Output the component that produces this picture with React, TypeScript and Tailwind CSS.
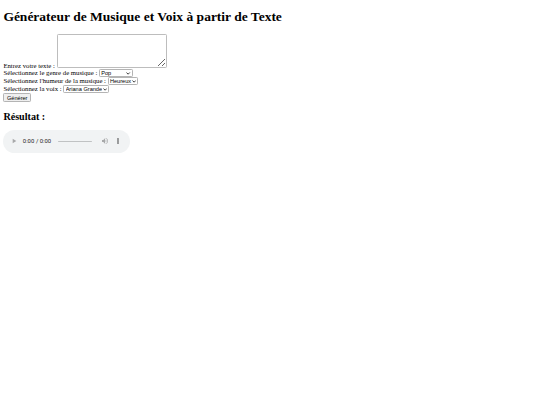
import React from 'react'

const Chevron = () => (
  <svg
    className="absolute right-[6px] top-[7px] pointer-events-none"
    width="10"
    height="7"
    viewBox="0 0 10 7"
  >
    <path d="M1 1.2l4 4 4-4" stroke="#000" strokeWidth="1.8" fill="none" />
  </svg>
)

const Select = ({ id, width, options }: { id: string; width: string; options: string[] }) => (
  <span className="relative inline-block">
    <select
      id={id}
      className={`appearance-none ${width} h-[19px] pl-[3px] pr-[14px] border border-[#b4b4b4] rounded-[3px] bg-white text-black font-['Liberation_Sans',Arial,sans-serif] text-[13.33px] leading-[normal]`}
    >
      {options.map((o) => (
        <option key={o}>{o}</option>
      ))}
    </select>
    <Chevron />
  </span>
)

const App: React.FC = () => {
  return (
    <div className="[zoom:0.421875] min-h-[960px] bg-white text-black font-['Liberation_Serif','Times_New_Roman',serif] text-[16px] leading-[normal]">
      <div className="m-[8px]">
        <h1 className="text-[32px] font-bold my-[21.44px]">Générateur de Musique et Voix à partir de Texte</h1>

        <form onSubmit={(e) => e.preventDefault()}>
          <label htmlFor="text">Entrez votre texte :</label>{' '}
          <textarea
            id="text"
            className="w-[262px] h-[81px] p-[2px] border border-[#bdbdbd] rounded-[3px] bg-white font-['DejaVu_Sans_Mono',monospace] text-[13.33px] leading-[normal] align-baseline"
          ></textarea>
          <br />
          <label htmlFor="genre">Sélectionnez le genre de musique :</label>{' '}
          <Select id="genre" width="w-[81px]" options={['Pop', 'Rock', 'Jazz', 'Classique']} />
          <br />
          <label htmlFor="mood">Sélectionnez l'humeur de la musique :</label>{' '}
          <Select id="mood" width="w-[73px]" options={['Heureux', 'Triste', 'Calme']} />
          <br />
          <label htmlFor="voice">Sélectionnez la voix :</label>{' '}
          <Select id="voice" width="w-[109px]" options={['Ariana Grande', 'Drake']} />
          <br />
          <button
            type="submit"
            className="px-[6px] py-[1px] border border-[#b4b4b4] rounded-[3px] bg-[#efefef] text-black font-['Liberation_Sans',Arial,sans-serif] text-[13.33px] leading-[normal]"
          >
            Générer
          </button>
        </form>

        <h2 className="text-[24px] font-bold my-[19.92px]">Résultat :</h2>
        <audio controls className="block"></audio>
      </div>
    </div>
  )
}

export default App
